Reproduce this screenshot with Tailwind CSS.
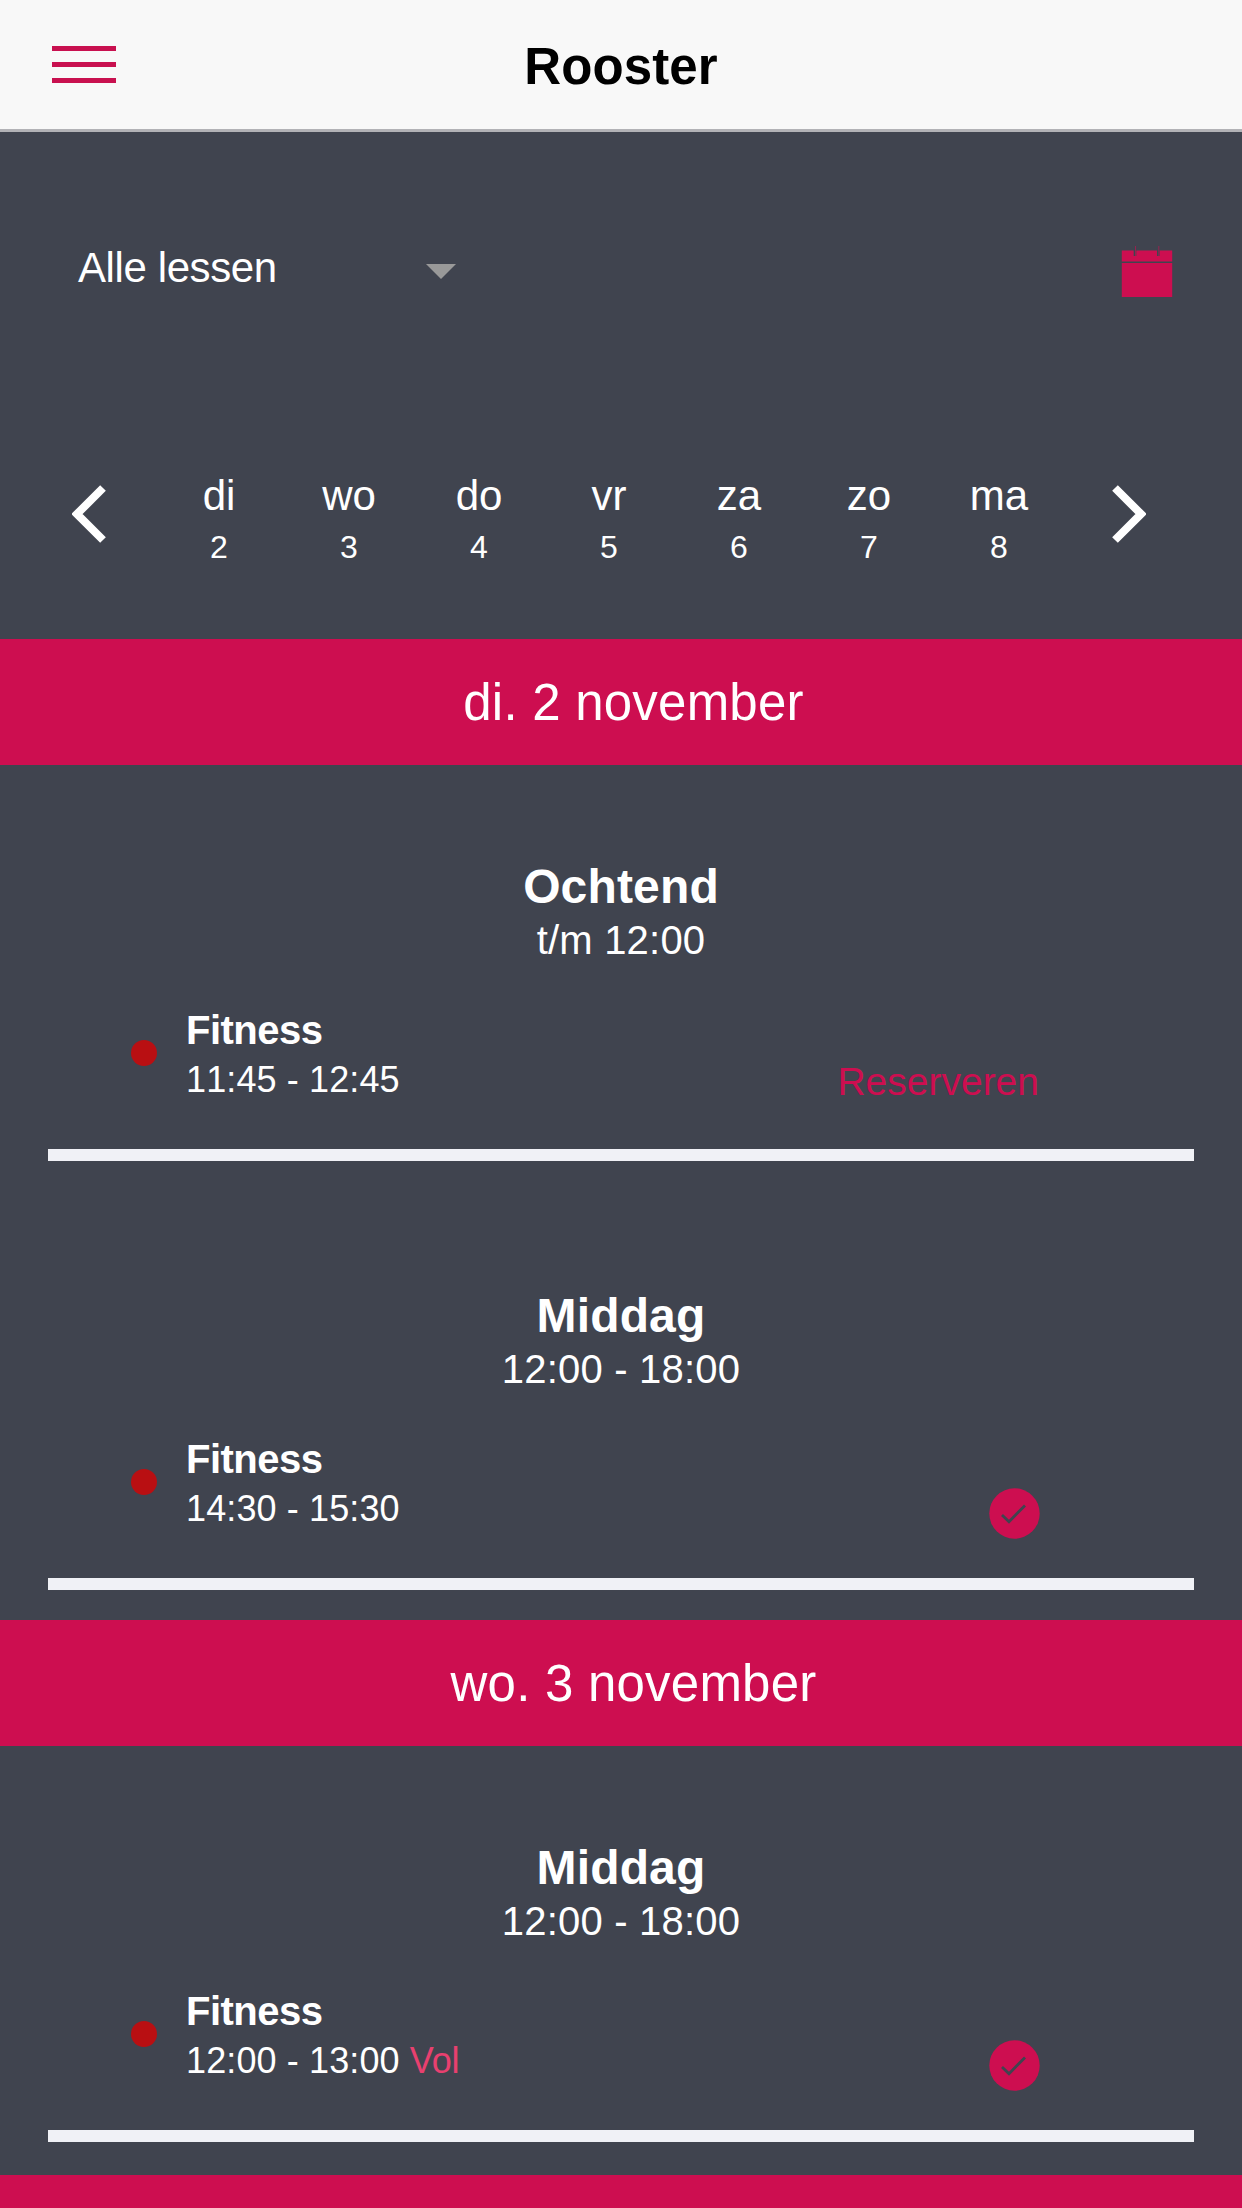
<!DOCTYPE html>
<html lang="nl">
<head>
    <meta charset="UTF-8">
    <meta name="viewport" content="width=device-width, initial-scale=1.0">
    <title>Rooster</title>
    <script src="https://cdn.jsdelivr.net/npm/@tailwindcss/browser@4"></script>
</head>
<body class="bg-[#40444f] h-[2208px] overflow-hidden font-['Liberation_Sans',Arial,sans-serif] [font-kerning:none]">
<div id="root"></div>

<script>
const root = document.getElementById('root');

const week = [['di', 2], ['wo', 3], ['do', 4], ['vr', 5], ['za', 6], ['zo', 7], ['ma', 8]];

const days = [
    { title: 'di. 2 november', parts: [
        { name: 'Ochtend', range: 't/m 12:00', lesson: 'Fitness', time: '11:45 - 12:45', booked: false },
        { name: 'Middag', range: '12:00 - 18:00', lesson: 'Fitness', time: '14:30 - 15:30', booked: true },
    ] },
    { title: 'wo. 3 november', parts: [
        { name: 'Middag', range: '12:00 - 18:00', lesson: 'Fitness', time: '12:00 - 13:00', full: true, booked: true },
    ] },
    { title: '', parts: [] },
];

const check = `
    <svg class="w-[51px] h-[51px] mt-[53px]" viewBox="0 0 51 51">
        <circle cx="25.5" cy="25.5" r="25.2" fill="#cd0e50"/>
        <path d="M13 27 L20 33.7 L36 17.5" fill="none" stroke="#40444f" stroke-width="2.8"/>
    </svg>`;

function renderPart(p) {
    return `
    <section class="h-[396px] mx-12 pt-[95px] border-b-12 border-[#f0f1f6] text-white">
        <h2 class="text-center text-[48px] leading-[54px] font-bold tracking-[0.15px]">${p.name}</h2>
        <p class="mt-[2px] text-center text-[40px] leading-[48px] tracking-[0.2px]">${p.range}</p>
        <div class="mt-[42px] pl-[83px] pr-[154px] flex">
            <span class="w-[26px] h-[26px] mt-[34px] rounded-full bg-[#b90f12]"></span>
            <div class="ml-[29px]">
                <h3 class="text-[40px] leading-[48px] font-bold tracking-[-0.5px]">${p.lesson}</h3>
                <p class="mt-[1px] text-[36px] leading-[50px] tracking-[0.12px]">${p.time}${p.full ? ' <span class="text-[#e8406f] tracking-[-0.2px] [font-kerning:normal]">Vol</span>' : ''}</p>
            </div>
            <div class="ml-auto">
                ${p.booked ? check : '<button class="mt-[51px] mr-[1px] text-[39px] leading-[50px] text-[#cd0e50]">Reserveren</button>'}
            </div>
        </div>
    </section>`;
}

root.innerHTML = `
    <header class="h-[132px] bg-[#f8f8f8] border-b-3 border-[#b2b2b6] px-[52px] grid grid-cols-3">
        <button class="w-16 mt-[46px] h-[37px] flex flex-col justify-between">
            <span class="w-16 h-[5px] bg-[#c8104f]"></span>
            <span class="w-16 h-[5px] bg-[#c8104f]"></span>
            <span class="w-16 h-[5px] bg-[#c8104f]"></span>
        </button>
        <h1 class="mt-[37px] text-center text-[51px] leading-[60px] font-bold text-black tracking-[0.1px]">Rooster</h1>
    </header>

    <div class="h-[348px] pt-[112px] pl-[78px] pr-[69px] flex text-white">
        <button class="w-[378px] h-[48px] flex items-center justify-between text-[42px] leading-[48px]">
            <span class="tracking-[-0.4px]">Alle lessen</span>
            <svg class="w-[30px] h-[15px] mt-[7px]" viewBox="0 0 30 15"><path d="M0 0H30L15 15Z" fill="#999999"/></svg>
        </button>
        <svg class="ml-auto w-[52px] h-[52px] mt-[2px]" viewBox="0 0 52 52">
            <path d="M.8 4.5H51.2V15.5H.8ZM.8 17H51.2V51H.8Z" fill="#cd0e50"/>
            <path d="M14 4V10M37.300 4V10" stroke="#40444f" stroke-width="2.600"/>
            <path d="M14.500 0V10M37.800 0V10" stroke="#cd0e50" stroke-width="1" opacity=".6"/>
        </svg>
    </div>

    <nav class="h-[159px] pl-[72px] pr-[96px] flex text-white">
        <svg class="w-[34px] h-[58px] mt-[5px]" viewBox="0 0 34 58"><path d="M31 3L5 29L31 55" fill="none" stroke="#fff" stroke-width="8"/></svg>
        <div class="ml-[48px] grid grid-cols-7 w-[910px]">
            ${week.map(([name, nr]) => `
                <button class="flex flex-col items-center">
                    <span class="text-[42px] leading-[48px] mt-[-8px]">${name}</span>
                    <span class="text-[32px] leading-[40px] mt-[7px]">${nr}</span>
                </button>
            `).join('')}
        </div>
        <svg class="ml-auto w-[34px] h-[58px] mt-[5px]" viewBox="0 0 34 58"><path d="M3 3L29 29L3 55" fill="none" stroke="#fff" stroke-width="8"/></svg>
    </nav>

    <main>
        ${days.map((d, i) => `
            <h2 class="${i === 1 ? 'mt-[30px]' : i === 2 ? 'mt-[33px]' : ''} h-[126px] pl-[25px] pt-[34px] bg-[#cd0e50] text-white text-center text-[51px] leading-[60px] tracking-[0.22px]">${d.title}</h2>
            <div class="space-y-[33px]">${d.parts.map(renderPart).join('')}</div>
        `).join('')}
    </main>
`;
</script>
</body>
</html>
